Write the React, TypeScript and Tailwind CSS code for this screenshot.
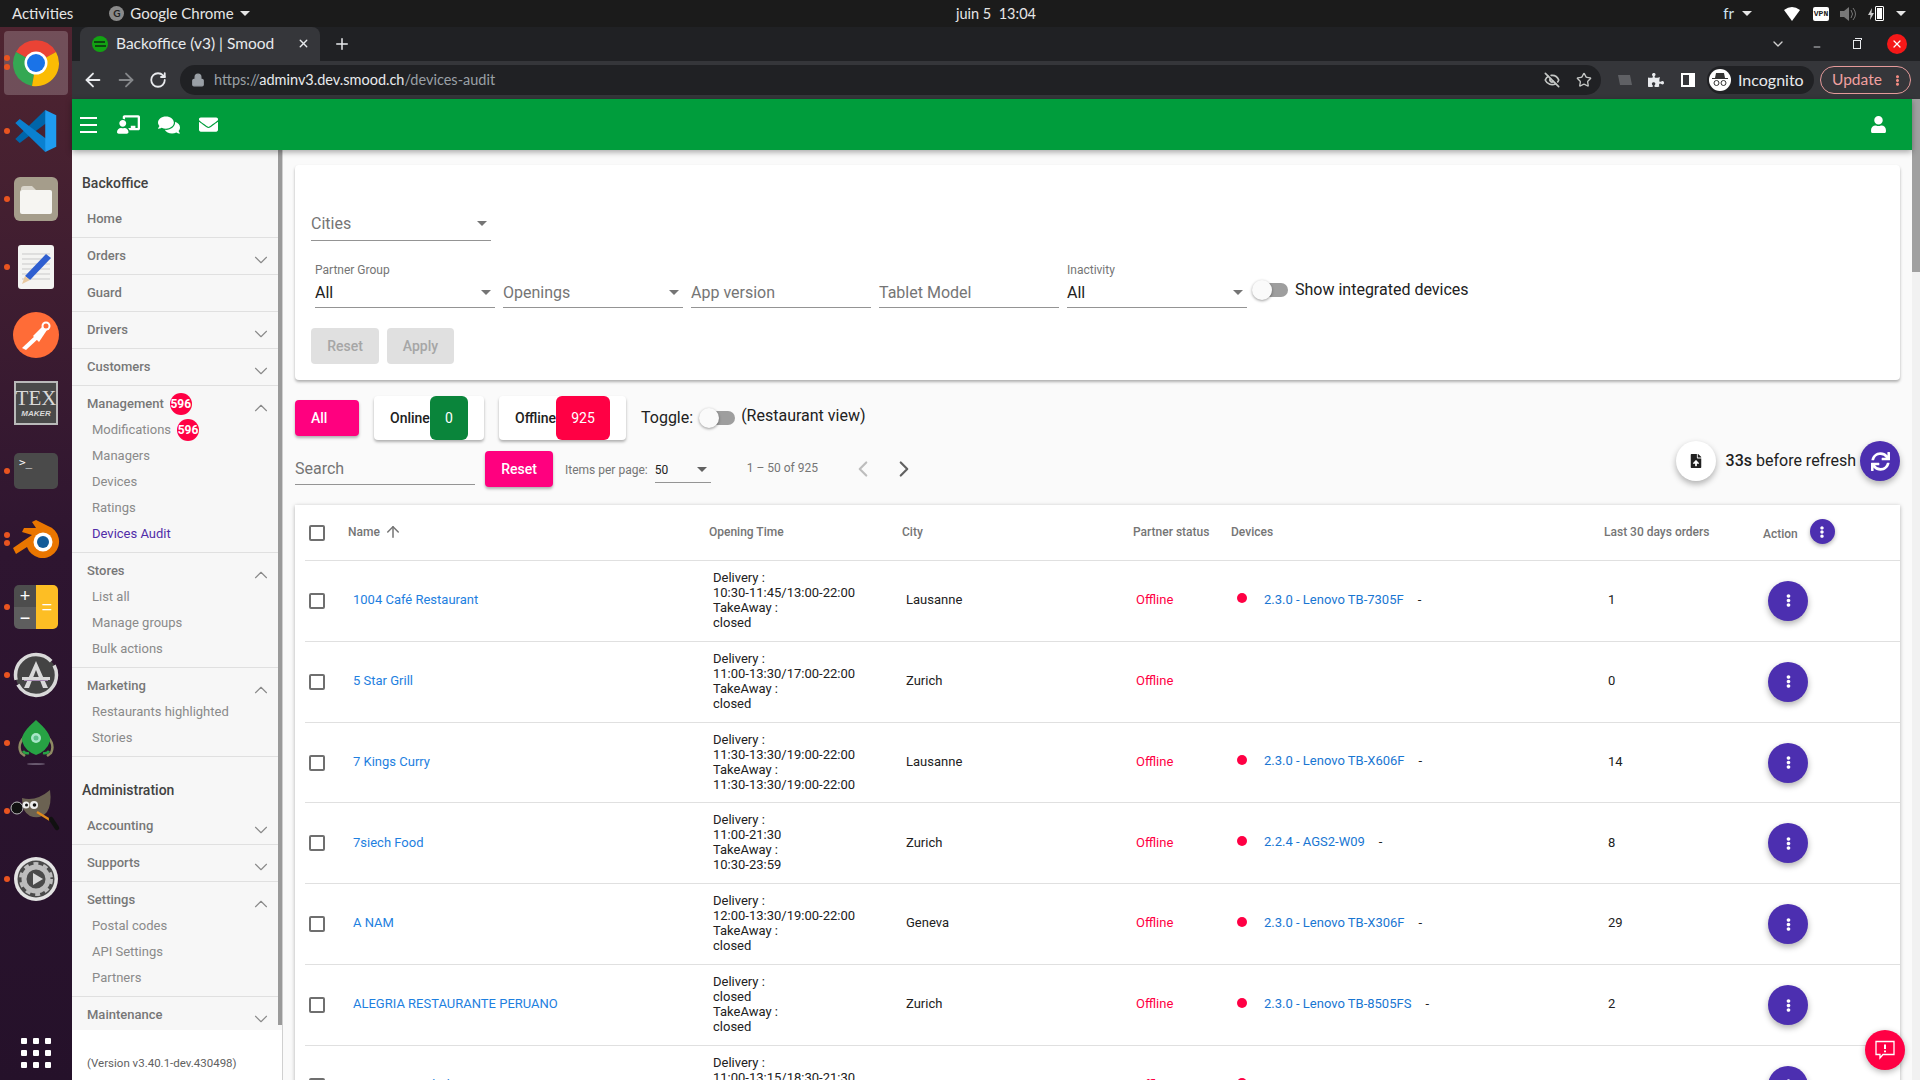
import React from "react";
import { FaChalkboardTeacher, FaComments, FaEnvelope, FaUser, FaEllipsisV, FaPuzzlePiece, FaSync, FaFileUpload } from "react-icons/fa";
import { ChevronDown, ChevronUp, ChevronLeft, ChevronRight, ArrowUp, ArrowLeft, ArrowRight, RotateCw, Lock, EyeOff, Star, Plus, X, Minus } from "lucide-react";

const Caret = ({ c = "border-t-[#757575]" }: { c?: string }) => (
  <span className={`block w-0 h-0 border-l-[5px] border-r-[5px] border-t-[5px] border-l-transparent border-r-transparent ${c}`} />
);

const Dot = ({ y }: { y: number }) => (
  <span className="absolute left-[4px] w-[6px] h-[6px] rounded-full bg-[#e95420]" style={{ top: y }} />
);

const DockChrome = () => (
  <svg width="48" height="48" viewBox="0 0 48 48">
    <path d="M24 24 L4 13 A23 23 0 0 1 44 13 Z" fill="#ea4335" />
    <path d="M24 24 L4 13 A23 23 0 0 0 20 47 Z" fill="#34a853" />
    <path d="M24 24 L44 13 A23 23 0 0 1 20 47 Z" fill="#fbbc04" />
    <circle cx="24" cy="24" r="11.5" fill="#fff" />
    <circle cx="24" cy="24" r="9" fill="#1a73e8" />
  </svg>
);
const DockCode = () => (
  <svg width="44" height="44" viewBox="0 0 100 100">
    <path d="M71 2 L76 30 L13 77 L3 68 Z" fill="#0065a9" />
    <path d="M71 98 L76 70 L13 23 L3 32 Z" fill="#0a80d0" />
    <path d="M71 2 L96 14 V86 L71 98 Z" fill="#1f9cf0" />
  </svg>
);
const DockFiles = () => (
  <div className="w-[44px] h-[44px] rounded-[6px] bg-[#a59d8b] flex items-center justify-center">
    <svg width="34" height="32" viewBox="0 0 34 32">
      <path d="M2 6 a3 3 0 0 1 3-3 h8 l4 4 h-15z" fill="#d9d5cb" />
      <rect x="1" y="7" width="32" height="24" rx="2" fill="#f6f5f2" />
    </svg>
  </div>
);
const DockGedit = () => (
  <svg width="36" height="44" viewBox="0 0 36 44">
    <rect x="0" y="0" width="36" height="44" rx="3" fill="#f4f4f2" />
    <g stroke="#c9c9c9" strokeWidth="1"><path d="M4 9h28M4 14h28M4 19h28M4 24h28M4 29h28M4 34h28" /></g>
    <path d="M28 9 L33 13 L12 35 L7 31 Z" fill="#2f5fd0" />
    <path d="M7 31 L12 35 L4 39 Z" fill="#e8c9a0" />
  </svg>
);
const DockPostman = () => (
  <svg width="46" height="46" viewBox="0 0 46 46">
    <circle cx="23" cy="23" r="23" fill="#ff6c37" />
    <path d="M9 36 L24 22 L27 25 L13 38 Z" fill="#fff" />
    <path d="M20 24 L30 14 L34 18 L26 30 Z" fill="#fff" />
    <circle cx="33" cy="14" r="4.5" fill="#fff" />
    <circle cx="33" cy="14" r="2.5" fill="#ff6c37" />
  </svg>
);
const DockTex = () => (
  <div className="w-[44px] h-[44px] border-[2px] border-[#b9b9b9] bg-[#4a4a4a] flex flex-col items-center justify-center text-[#d9d9d9]">
    <span className="text-[21px] leading-[21px] font-['Liberation_Serif',serif]">TEX</span>
    <span className="text-[8px] leading-[9px] font-bold italic font-['Liberation_Sans',sans-serif]">MAKER</span>
  </div>
);
const DockTerm = () => (
  <div className="w-[44px] h-[36px] rounded-[5px] bg-[#4a4a4a] text-white font-['DejaVu_Sans_Mono',monospace] text-[11px] leading-[14px] pl-[5px] pt-[3px]">&gt;_</div>
);
const DockBlender = () => (
  <svg width="48" height="40" viewBox="0 0 48 40">
    <path d="M1 29 L20 16 L10 13 L12 9 L24 9 L20 3 L24 1 L36 7 A16.5 16.5 0 1 1 15 28 L4 35 Z" fill="#ea7600" />
    <circle cx="31" cy="23" r="9.5" fill="#fff" />
    <circle cx="31" cy="23" r="6" fill="#135b98" />
  </svg>
);
const DockCalc = () => (
  <div className="w-[44px] h-[44px] rounded-[5px] overflow-hidden grid grid-cols-2 grid-rows-2 text-white text-[18px] leading-none font-['Liberation_Sans',sans-serif]">
    <div className="bg-[#4d4d4d] flex items-center justify-center">+</div>
    <div className="row-span-2 bg-[#fdbe24] flex items-center justify-center">=</div>
    <div className="bg-[#5e5e5e] flex items-center justify-center">−</div>
  </div>
);
const DockSoftware = () => (
  <svg width="46" height="46" viewBox="0 0 46 46">
    <circle cx="23" cy="23" r="20.5" fill="#444" stroke="#d9d9d9" strokeWidth="3.5" strokeDasharray="54 5" />
    <path d="M23 9 L35 36 H30 L23 18 L16 36 H11 Z" fill="#d9d9d9" />
    <rect x="9" y="25" width="28" height="3" fill="#d9d9d9" />
    <rect x="11" y="28" width="24" height="1" fill="#a58ab0" />
  </svg>
);
const DockRocket = () => (
  <svg width="36" height="46" viewBox="0 0 36 46">
    <path d="M6 17 Q-1 25 3 33 L7 36 M30 17 Q37 25 33 33 L29 36" stroke="#8e8a63" strokeWidth="2.5" fill="none" />
    <path d="M5 31 Q7 34 11 33 M31 31 Q29 34 25 33" stroke="#27a244" strokeWidth="2.5" fill="none" />
    <path d="M18 0 C27 8 33 15 32 21 Q29 31 18 35 Q7 31 4 21 C3 15 9 8 18 0 Z" fill="#27a244" />
    <circle cx="18" cy="18" r="5" fill="#a8e6c8" />
    <circle cx="18" cy="18" r="2.5" fill="#5cc08a" />
    <ellipse cx="18" cy="44" rx="9" ry="1" fill="#6a5a70" />
  </svg>
);
const DockGimp = () => (
  <svg width="52" height="42" viewBox="0 0 52 42">
    <path d="M12 8 Q26 12 40 0 Q42 14 37 22 Q30 30 20 26 Q12 22 12 8 Z" fill="#6b6252" />
    <circle cx="7" cy="18" r="6" fill="#111" stroke="#bbb" strokeWidth="1" />
    <circle cx="16" cy="15" r="3.5" fill="#eee" /><circle cx="16.5" cy="15" r="1.5" fill="#111" />
    <circle cx="24" cy="15" r="4" fill="#eee" /><circle cx="24.5" cy="15" r="1.8" fill="#111" />
    <path d="M27 22 L40 30" stroke="#e08a1c" strokeWidth="2.5" />
    <path d="M41 29 L47 38" stroke="#111" strokeWidth="4.5" strokeLinecap="round" />
  </svg>
);
const DockSettings = () => (
  <svg width="46" height="46" viewBox="0 0 46 46">
    <circle cx="23" cy="23" r="22" fill="#e3e3e3" />
    <circle cx="23" cy="23" r="18.5" fill="#4a4a4a" />
    <circle cx="23" cy="23" r="12" fill="none" stroke="#bdbdbd" strokeWidth="5" />
    <circle cx="23" cy="23" r="15.5" fill="none" stroke="#bdbdbd" strokeWidth="3" strokeDasharray="5 5" />
    <path d="M20 17 L30 23 L20 29 Z" fill="#d9d9d9" />
  </svg>
);

const dock = [DockChrome, DockCode, DockFiles, DockGedit, DockPostman, DockTex, DockTerm, DockBlender, DockCalc, DockSoftware, DockRocket, DockGimp, DockSettings];
const dotsY = [28, 37, 101, 169, 237, 441, 505, 513, 577, 645, 713, 781, 849];

function Dock() {
  return (
    <div className="relative w-[72px] h-[1053px] shrink-0 bg-gradient-to-b from-[#4f2430] via-[#2e1530] to-[#25112a] flex flex-col items-center pt-[2px]">
      <div className="absolute left-[4px] top-[4px] w-[64px] h-[64px] rounded-[4px] bg-white/20" />
      {dock.map((D, i) => (
        <div key={i} className="relative h-[68px] w-full shrink-0 flex items-center justify-center"><D /></div>
      ))}
      <div className="mt-auto mb-[12px] grid grid-cols-3 gap-[6px]">
        {Array.from({ length: 9 }).map((_, i) => <span key={i} className="w-[6px] h-[6px] rounded-[1px] bg-white" />)}
      </div>
      {dotsY.map((y) => <Dot key={y} y={y} />)}
    </div>
  );
}

function TopBar() {
  return (
    <div className="h-[27px] bg-[#1b1b1b] flex items-center text-[#e6e6e6] text-[15px] font-['Lato',sans-serif] shrink-0 relative">
      <span className="ml-[12px]">Activities</span>
      <span className="ml-[36px] w-[15px] h-[15px] rounded-full bg-[#8a8a8a] flex items-center justify-center text-[10px] text-[#222] font-bold">G</span>
      <span className="ml-[6px]">Google Chrome</span>
      <span className="ml-[6px]"><Caret c="border-t-[#e6e6e6]" /></span>
      <span className="absolute left-[956px] text-[14.5px]">juin 5&nbsp;&nbsp;13:04</span>
      <div className="ml-auto flex items-center mr-[14px]">
        <span className="text-[#cfe3f0]">fr</span>
        <span className="ml-[8px]"><Caret c="border-t-[#e6e6e6]" /></span>
        <svg className="ml-[32px]" width="16" height="14" viewBox="0 0 16 14"><path d="M0 3 Q8 -3 16 3 L8 14 Z" fill="#fff" /></svg>
        <span className="ml-[13px] w-[16px] h-[14px] rounded-[2px] bg-white text-[#222] text-[8px] leading-[14px] text-center font-bold font-['Liberation_Mono',monospace]">VPN</span>
        <svg className="ml-[11px]" width="16" height="14" viewBox="0 0 16 14"><path d="M0 4h4l5-4v14l-5-4H0z" fill="#777" /><path d="M11 3q3 4 0 8M13 1q5 6 0 12" stroke="#777" fill="none" /></svg>
        <svg className="ml-[12px]" width="6" height="12" viewBox="0 0 6 12"><path d="M4 0 L0 7 H2.5 L2 12 L6 5 H3.5 Z" fill="#ccc" /></svg>
        <span className="ml-[1px] w-[9px] h-[15px] border border-white rounded-[1px] p-[1px] flex"><span className="bg-white flex-1" /></span>
        <span className="ml-[12px]"><Caret c="border-t-[#e6e6e6]" /></span>
      </div>
    </div>
  );
}

function ChromeBars() {
  return (
    <div className="shrink-0 font-['Lato',sans-serif]">
      <div className="h-[34px] bg-[#202124] flex items-end relative">
        <div className="ml-[8px] w-[240px] h-[34px] bg-[#35363a] rounded-t-[8px] flex items-center text-[#e8eaed] text-[15.5px] pb-[1px]">
          <svg className="ml-[11px]" width="18" height="18" viewBox="0 0 18 18"><circle cx="9" cy="9" r="8" fill="#13a313" /><path d="M3 7h11M4 11h11" stroke="#0c2a10" strokeWidth="1.5" /></svg>
          <span className="ml-[7px] w-[177px] whitespace-nowrap">Backoffice (v3) | Smood</span>
          <X className="ml-[4px]" size={13} color="#e8eaed" strokeWidth={2.5} />
        </div>
        <Plus className="ml-[13px] mb-[8px]" size={18} color="#e8eaed" strokeWidth={2} />
        <div className="ml-auto flex items-center h-full mr-[13px] text-white">
          <ChevronDown size={16} color="#d0d0d0" />
          <Minus className="ml-[26px] mt-[6px]" size={10} strokeWidth={2} color="#e8eaed" />
          <span className="ml-[31px] w-[8px] h-[9px] border border-[#e8eaed] block relative"><span className="absolute -top-[3px] left-[1px] w-[7px] h-[2px] border-t border-r border-[#e8eaed]" /></span>
          <span className="ml-[26px] w-[20px] h-[20px] rounded-full bg-[#f51818] flex items-center justify-center"><X size={12} color="#fff" strokeWidth={2.5} /></span>
        </div>
      </div>
      <div className="h-[38px] bg-[#35363a] flex items-center">
        <ArrowLeft className="ml-[10px]" size={22} color="#e8eaed" strokeWidth={2} />
        <ArrowRight className="ml-[11px]" size={22} color="#85878a" strokeWidth={2} />
        <RotateCw className="ml-[12px]" size={18} color="#e8eaed" strokeWidth={2.4} />
        <div className="ml-[13px] w-[1421px] h-[30px] rounded-full bg-[#202124] flex items-center text-[14.5px]">
          <Lock className="ml-[11px]" size={14} color="#9aa0a6" fill="#9aa0a6" />
          <span className="ml-[9px] text-[#9aa0a6]">https://<span className="text-[#e8eaed]">adminv3.dev.smood.ch</span>/devices-audit</span>
          <EyeOff className="ml-auto" size={16} color="#c4c7c5" strokeWidth={2.5} />
          <Star className="ml-[16px] mr-[9px]" size={16} color="#c4c7c5" strokeWidth={2} />
        </div>
        <svg className="ml-[17px]" width="14" height="10" viewBox="0 0 14 10"><path d="M0 0h12l2 10H2z" fill="#5f6064" /></svg>
        <FaPuzzlePiece className="ml-[16px]" size={16} color="#e8eaed" />
        <span className="ml-[17px] w-[14px] h-[14px] border-[2px] border-white border-r-[6px] bg-[#35363a] block" />
        <div className="ml-[12px] w-[107px] h-[28px] rounded-full bg-[#202124] flex items-center text-[#e8eaed] text-[16px]">
          <span className="ml-[2px] w-[22px] h-[22px] rounded-full bg-white flex items-center justify-center">
            <svg width="16" height="14" viewBox="0 0 16 14"><path d="M4 0h8l1 5h3v1H0V5h3z" fill="#333" /><circle cx="4.5" cy="10" r="2.5" fill="none" stroke="#333" /><circle cx="11.5" cy="10" r="2.5" fill="none" stroke="#333" /></svg>
          </span>
          <span className="ml-[7px]">Incognito</span>
        </div>
        <div className="ml-[6px] w-[91px] h-[28px] rounded-full border border-[#e59a9a] flex items-center text-[#f0a0a0] text-[15.5px]">
          <span className="ml-[11px]">Update</span>
          <FaEllipsisV className="ml-auto mr-[7px]" size={11} color="#f28b82" />
        </div>
      </div>
    </div>
  );
}

const Badge = () => (
  <span className="ml-[6px] w-[22px] h-[22px] rounded-full bg-[#ff0044] text-white text-[12px] font-bold flex items-center justify-center">596</span>
);

function Group({ label, open, items, badge, noChevron }: { label: string; open?: boolean; items?: { t: string; active?: boolean; badge?: boolean }[]; badge?: boolean; noChevron?: boolean }) {
  return (
    <div className="border-b border-[#e0e0e0]">
      <div className="h-[36px] flex items-center relative pl-[15px] text-[13px] font-medium text-[#777]">
        <span>{label}</span>
        {badge && <Badge />}
        {!noChevron && (
          <span className="absolute right-[6px] top-[11px]">
            {open ? <ChevronUp size={22} color="#8a8a8a" strokeWidth={1.2} /> : <ChevronDown size={22} color="#8a8a8a" strokeWidth={1.2} />}
          </span>
        )}
      </div>
      {items && (
        <div className="pb-[5px] -mt-[5px]">
          {items.map((it) => (
            <div key={it.t} className={`h-[26px] pl-[20px] flex items-center text-[13px] ${it.active ? "text-[#512da8]" : "text-[#8a8a8a]"}`}>
              <span>{it.t}</span>
              {it.badge && <Badge />}
            </div>
          ))}
        </div>
      )}
    </div>
  );
}

function Sidebar() {
  return (
    <div className="w-[211px] shrink-0 h-full flex flex-col bg-white border-r border-[#d0d0d0] overflow-hidden">
      <div className="h-[880px] bg-[#f7f7f7] relative shrink-0 overflow-hidden">
        <div className="w-[206px] pt-[21px]">
          <div className="h-[24px] pl-[10px] text-[14px] font-medium text-[#424242] flex items-center">Backoffice</div>
          <div className="h-[6px]" />
          <Group label="Home" noChevron />
          <Group label="Orders" />
          <Group label="Guard" noChevron />
          <Group label="Drivers" />
          <Group label="Customers" />
          <Group label="Management" open badge items={[{ t: "Modifications", badge: true }, { t: "Managers" }, { t: "Devices" }, { t: "Ratings" }, { t: "Devices Audit", active: true }]} />
          <Group label="Stores" open items={[{ t: "List all" }, { t: "Manage groups" }, { t: "Bulk actions" }]} />
          <Group label="Marketing" open items={[{ t: "Restaurants highlighted" }, { t: "Stories" }]} />
          <div className="h-[24px]" />
          <div className="h-[18px] pl-[10px] text-[14px] font-medium text-[#424242] flex items-center">Administration</div>
          <div className="h-[9px]" />
          <Group label="Accounting" />
          <Group label="Supports" />
          <Group label="Settings" open items={[{ t: "Postal codes" }, { t: "API Settings" }, { t: "Partners" }]} />
          <Group label="Maintenance" />
        </div>
        <div className="absolute right-0 top-0 w-[4px] h-[875px] bg-[#9a9a9a]" />
      </div>
      <div className="pl-[15px] pt-[25px] text-[11.5px] text-[#616161]">(Version v3.40.1-dev.430498)</div>
    </div>
  );
}

const Sel = ({ label, value, w = 180, caret = true }: { label?: string; value: string; w?: number; caret?: boolean }) => (
  <div className="shrink-0 relative" style={{ width: w }}>
    {label && <div className="text-[12px] leading-[14px] text-[#757575] h-[14px] mb-[5px]">{label}</div>}
    <div className={`h-[26px] border-b border-[#949494] flex items-start justify-between text-[16px] leading-[19px] pt-[1px] ${label ? "text-[#212121]" : "text-[#757575]"}`}>
      <span>{value}</span>
      {caret && <span className="mr-[4px] mt-[7px]"><Caret /></span>}
    </div>
  </div>
);

const rows = [
  { n: "1004 Café Restaurant", o: ["Delivery :", "10:30-11:45/13:00-22:00", "TakeAway :", "closed"], c: "Lausanne", d: "2.3.0 - Lenovo TB-7305F", l: "1" },
  { n: "5 Star Grill", o: ["Delivery :", "11:00-13:30/17:00-22:00", "TakeAway :", "closed"], c: "Zurich", d: "", l: "0" },
  { n: "7 Kings Curry", o: ["Delivery :", "11:30-13:30/19:00-22:00", "TakeAway :", "11:30-13:30/19:00-22:00"], c: "Lausanne", d: "2.3.0 - Lenovo TB-X606F", l: "14" },
  { n: "7siech Food", o: ["Delivery :", "11:00-21:30", "TakeAway :", "10:30-23:59"], c: "Zurich", d: "2.2.4 - AGS2-W09", l: "8" },
  { n: "A NAM", o: ["Delivery :", "12:00-13:30/19:00-22:00", "TakeAway :", "closed"], c: "Geneva", d: "2.3.0 - Lenovo TB-X306F", l: "29" },
  { n: "ALEGRIA RESTAURANTE PERUANO", o: ["Delivery :", "closed", "TakeAway :", "closed"], c: "Zurich", d: "2.3.0 - Lenovo TB-8505FS", l: "2" },
  { n: "ANATOLIA Kebab", o: ["Delivery :", "11:00-13:15/18:30-21:30", "TakeAway :", "closed"], c: "Lausanne", d: "2.3.0 - Lenovo TB-X306F", l: "5" },
];

const COLS = "grid grid-cols-[43px_361px_193px_231px_98px_373px_159px_1fr]";
const Check = () => <span className="block w-[16px] h-[16px] border-[2px] border-[#6f6f6f] rounded-[2px]" />;

const Fab = ({ cls, children }: { cls: string; children: React.ReactNode }) => (
  <span className={`w-[40px] h-[40px] rounded-full flex items-center justify-center shadow-[0_3px_6px_rgba(0,0,0,0.3)] ${cls}`}>{children}</span>
);

const Toggle = ({ cls }: { cls: string }) => (
  <span className={`relative w-[36px] h-[20px] flex items-center ${cls}`}>
    <span className="absolute left-[6px] w-[30px] h-[14px] rounded-full bg-[#9e9e9e]" />
    <span className="absolute left-0 w-[20px] h-[20px] rounded-full bg-[#fafafa] shadow-[0_1px_3px_rgba(0,0,0,0.4)]" />
  </span>
);

export default function App() {
  return (
    <div className="w-[1920px] h-[1080px] overflow-hidden flex flex-col bg-white font-['Roboto',sans-serif] relative">
      <TopBar />
      <div className="flex flex-1 min-h-0">
        <Dock />
        <div className="flex-1 min-w-0 flex flex-col">
          <ChromeBars />
          <div className="flex-1 min-h-0 flex">
            <div className="flex-1 min-w-0 flex flex-col">
              <div className="h-[51px] shrink-0 bg-[#009d3c] flex items-center text-white shadow-[0_2px_6px_rgba(0,0,0,0.35)] relative z-10 pr-[25px]">
                <svg className="ml-[8px]" width="17" height="16" viewBox="0 0 17 16" fill="#fff"><rect width="17" height="2" /><rect y="7" width="17" height="2" /><rect y="14" width="17" height="2" /></svg>
                <FaChalkboardTeacher className="ml-[20px]" size={23} />
                <FaComments className="ml-[18px]" size={22} />
                <FaEnvelope className="ml-[19px]" size={19} />
                <FaUser className="ml-auto" size={17} />
              </div>
              <div className="flex-1 min-h-0 flex">
                <Sidebar />
                <div className="flex-1 min-w-0 bg-[#fafafa] pl-[12px] pr-[12px] pt-[15px] overflow-hidden relative">
                  <div className="h-[215px] bg-white rounded-[4px] shadow-[0_2px_3px_rgba(0,0,0,0.3)] px-[16px] pt-[46px]">
                    <div className="w-[180px] h-[30px] border-b border-[#949494] flex items-start justify-between text-[16px] leading-[19px] pt-[3px] text-[#757575]">
                      <span>Cities</span>
                      <span className="mr-[4px] mt-[7px]"><Caret /></span>
                    </div>
                    <div className="flex items-end gap-[8px] mt-[22px] ml-[4px]">
                      <Sel label="Partner Group" value="All" />
                      <Sel value="Openings" />
                      <Sel value="App version" caret={false} />
                      <Sel value="Tablet Model" caret={false} />
                      <Sel label="Inactivity" value="All" />
                      <Toggle cls="ml-[-3px] mb-[8px]" />
                      <span className="text-[16px] leading-[19px] text-[#212121] mb-[9px] -ml-[1px]">Show integrated devices</span>
                    </div>
                    <div className="flex gap-[8px] mt-[20px]">
                      <span className="w-[68px] h-[36px] rounded-[4px] bg-[#e0e0e0] text-[#a6a6a6] text-[14px] font-medium flex items-center justify-center">Reset</span>
                      <span className="w-[67px] h-[36px] rounded-[4px] bg-[#e0e0e0] text-[#a6a6a6] text-[14px] font-medium flex items-center justify-center">Apply</span>
                    </div>
                  </div>

                  <div className="flex items-center h-[44px] mt-[16px] text-[14px] font-medium text-[#212121]">
                    <span className="w-[64px] h-[36px] rounded-[4px] bg-[#ff007f] text-white pl-[16px] flex items-center shadow-[0_2px_3px_rgba(0,0,0,0.3)]">All</span>
                    <span className="ml-[15px] w-[110px] h-[44px] rounded-[4px] bg-white flex items-center justify-between pl-[16px] shadow-[0_2px_3px_rgba(0,0,0,0.3)]">
                      Online
                      <span className="w-[38px] h-[44px] rounded-[6px] bg-[#0a853b] text-white font-normal flex items-center justify-center mr-[16px]">0</span>
                    </span>
                    <span className="ml-[15px] w-[127px] h-[44px] rounded-[4px] bg-white flex items-center justify-between pl-[16px] shadow-[0_2px_3px_rgba(0,0,0,0.3)]">
                      Offline
                      <span className="w-[54px] h-[44px] rounded-[6px] bg-[#ff0044] text-white font-normal flex items-center justify-center mr-[16px]">925</span>
                    </span>
                    <span className="ml-[15px] text-[16px] font-normal">Toggle:</span>
                    <Toggle cls="ml-[6px]" />
                    <span className="ml-[6px] text-[16px] font-normal -mt-[4px]">(Restaurant view)</span>
                  </div>

                  <div className="flex items-start h-[47px]">
                    <div className="w-[180px] h-[33px] border-b border-[#949494] text-[16px] text-[#757575] mt-[12px] pt-[7px] leading-[19px]">Search</div>
                    <span className="ml-[10px] mt-[11px] w-[68px] h-[36px] rounded-[4px] bg-[#ff007f] text-white text-[14px] font-medium flex items-center justify-center shadow-[0_2px_3px_rgba(0,0,0,0.3)]">Reset</span>
                    <span className="ml-[12px] mt-[23px] text-[12px] leading-[14px] text-[#757575]">Items per page:</span>
                    <div className="ml-[7px] mt-[15px] w-[56px] h-[28px] border-b border-[#949494] pt-[8px] text-[12px] leading-[14px] text-[#212121] flex justify-between">
                      50<span className="mr-[4px] mt-[4px]"><Caret c="border-t-[#616161]" /></span>
                    </div>
                    <span className="ml-[36px] mt-[21px] text-[12px] leading-[14px] text-[#757575]">1 – 50 of 925</span>
                    <ChevronLeft className="ml-[32px] mt-[16px]" size={26} color="#bdbdbd" strokeWidth={2} />
                    <ChevronRight className="ml-[15px] mt-[16px]" size={26} color="#616161" strokeWidth={2} />
                    <div className="ml-auto flex items-center h-[40px] mt-[1px]">
                      <Fab cls="bg-white"><FaFileUpload size={14} color="#212121" /></Fab>
                      <span className="ml-[10px] text-[16px] text-[#212121] -mt-[1px]"><b className="font-medium">33s</b> before refresh</span>
                      <Fab cls="bg-[#4c2fb0] ml-[4px]"><FaSync size={19} color="#fff" /></Fab>
                    </div>
                  </div>

                  <div className="mt-[18px] bg-white shadow-[0_1px_4px_rgba(0,0,0,0.3)] pl-[10px]">
                    <div className={`${COLS} h-[56px] items-center border-b border-[#e0e0e0] text-[12px] font-medium text-[#757575]`}>
                      <span className="pl-[4px]"><Check /></span>
                      <span className="flex items-center gap-[4px] -mt-[2px]">Name <ArrowUp size={18} strokeWidth={2} /></span>
                      <span className="-mt-[2px]">Opening Time</span>
                      <span className="-mt-[2px]">City</span>
                      <span className="-mt-[2px] whitespace-nowrap">Partner status</span>
                      <span className="-mt-[2px]">Devices</span>
                      <span className="-mt-[2px]">Last 30 days orders</span>
                      <span className="flex items-center gap-[12px]"><span className="mt-[2px]">Action</span>
                        <span className="w-[25px] h-[25px] rounded-full bg-[#4c2fb0] flex items-center justify-center shadow-[0_2px_4px_rgba(0,0,0,0.3)] -mt-[2px]"><FaEllipsisV size={12} color="#fff" /></span>
                      </span>
                    </div>
                    {rows.map((r) => (
                      <div key={r.n} className={`${COLS} h-[80.83px] items-center border-b border-[#e0e0e0] text-[13px] text-[#212121]`}>
                        <span className="pl-[4px]"><Check /></span>
                        <span className="pl-[5px] text-[#1e80e0] -mt-[2px]">{r.n}</span>
                        <span className="pl-[4px] leading-[15px] whitespace-pre-line -mt-[2px]">{r.o.join("\n")}</span>
                        <span className="pl-[4px] -mt-[2px]">{r.c}</span>
                        <span className="pl-[3px] text-[#ff0044] -mt-[2px]">Offline</span>
                        <span className="pl-[6px] flex items-center -mt-[3px]">
                          {r.d && <>
                            <span className="w-[10px] h-[10px] rounded-full bg-[#ff0044] mr-[17px] -mt-[2px]" />
                            <span className="text-[#1976d2]">{r.d}</span>
                            <span className="ml-[14px]">-</span>
                          </>}
                        </span>
                        <span className="pl-[4px] -mt-[2px]">{r.l}</span>
                        <span className="pl-[5px]"><Fab cls="bg-[#4c2fb0]"><FaEllipsisV size={13} color="#fff" /></Fab></span>
                      </div>
                    ))}
                  </div>
                  <div className="absolute right-[7px] top-[880px] w-[40px] h-[40px] rounded-full bg-[#ff0044] flex items-center justify-center shadow-[0_2px_6px_rgba(0,0,0,0.3)]">
                    <svg width="22" height="22" viewBox="0 0 22 22"><path d="M2 2.5h18v13h-11l-3 3.5v-3.5H2z" fill="none" stroke="#fff" strokeWidth="1.3" /><path d="M11 5.5v4.5M11 11.5v1.7" stroke="#fff" strokeWidth="2" /></svg>
                  </div>
                </div>
              </div>
            </div>
            <div className="w-[8px] shrink-0 bg-[#f1f1f1]"><div className="h-[173px] bg-[#a0a0a0]" /></div>
          </div>
        </div>
      </div>
    </div>
  );
}
